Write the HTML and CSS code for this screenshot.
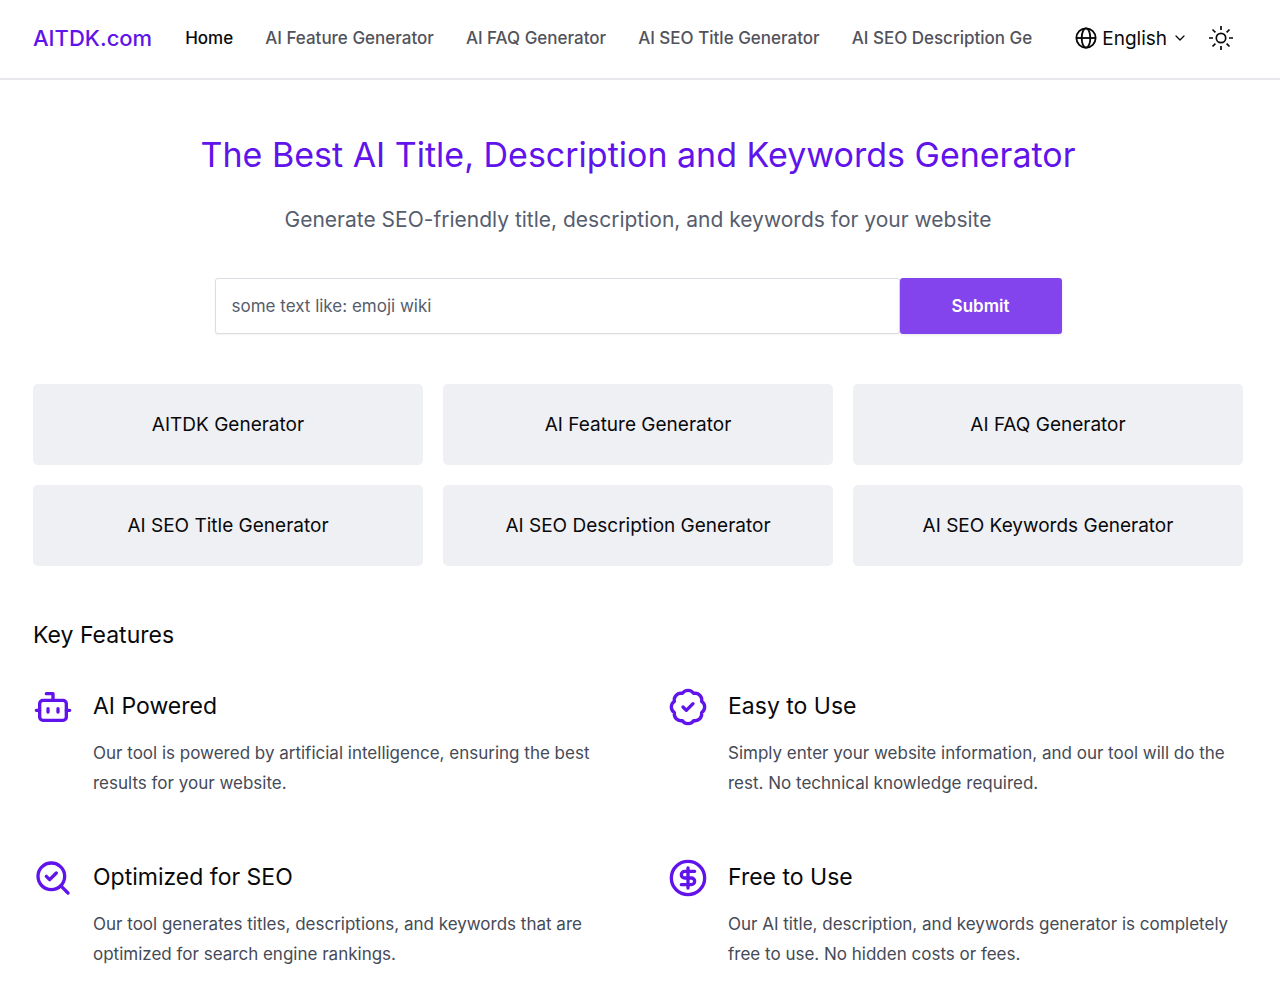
FILE: index.html
```html
<!DOCTYPE html>
<html lang="en">
<head>
<meta charset="utf-8">
<meta name="viewport" content="width=device-width, initial-scale=1">
<title>AITDK.com</title>
<link rel="stylesheet" href="styles.css">
</head>
<body>
<header class="header">
  <a class="brand" href="#">AITDK.com</a>
  <nav class="nav" aria-label="Main">
    <a class="nav-link active" href="#">Home</a>
    <a class="nav-link" href="#">AI Feature Generator</a>
    <a class="nav-link" href="#">AI FAQ Generator</a>
    <a class="nav-link" href="#">AI SEO Title Generator</a>
    <a class="nav-link" href="#">AI SEO Description Generator</a>
  </nav>
  <div class="tools">
    <button class="language" type="button">
      <svg class="globe" viewBox="0 0 24 24" fill="none" stroke="currentColor" stroke-width="2" aria-hidden="true"><circle cx="12" cy="12" r="10.5"/><ellipse cx="12" cy="12" rx="4.7" ry="10.5"/><path d="M1.5 12h21"/></svg>
      <span>English</span>
      <svg class="chevron" viewBox="0 0 12 12" fill="none" stroke="currentColor" stroke-width="1.3" stroke-linecap="round" stroke-linejoin="round" aria-hidden="true"><path d="M2 4l4 4 4-4"/></svg>
    </button>
    <button class="theme" type="button" aria-label="Toggle theme">
      <svg class="sun" viewBox="0 0 26 26" fill="none" stroke="currentColor" stroke-width="1.7" aria-hidden="true"><circle cx="13" cy="13" r="4.7"/><path d="M13 1v4M13 21v4M1 13h4M21 13h4M4.5 4.5l2.9 2.9M18.6 18.6l2.9 2.9M21.5 4.5l-2.9 2.9M7.4 18.6l-2.9 2.9"/></svg>
    </button>
  </div>
</header>
<main class="main">
  <section class="hero">
    <h1 class="hero-title">The Best AI Title, Description and Keywords Generator</h1>
    <p class="hero-text">Generate SEO-friendly title, description, and keywords for your website</p>
    <form class="search">
      <input class="search-input" type="text" aria-label="Website topic" placeholder="some text like: emoji wiki">
      <button class="search-button" type="submit">Submit</button>
    </form>
  </section>
  <nav class="cards" aria-label="Generators">
    <a class="card" href="#">AITDK Generator</a>
    <a class="card" href="#">AI Feature Generator</a>
    <a class="card" href="#">AI FAQ Generator</a>
    <a class="card" href="#">AI SEO Title Generator</a>
    <a class="card" href="#">AI SEO Description Generator</a>
    <a class="card" href="#">AI SEO Keywords Generator</a>
  </nav>
  <section>
    <h2 class="section-title">Key Features</h2>
    <div class="features">
      <article class="feature">
        <svg class="feature-icon" viewBox="0 0 24 24" aria-hidden="true"><rect x="4" y="8" width="16" height="12" rx="2"/><path d="M12 8V4H8M2 14h2M20 14h2M15 13v2M9 13v2"/></svg>
        <div>
          <h3 class="feature-title">AI Powered</h3>
          <p class="feature-text">Our tool is powered by artificial intelligence, ensuring the best results for your website.</p>
        </div>
      </article>
      <article class="feature">
        <svg class="feature-icon" viewBox="0 0 24 24" aria-hidden="true"><path d="M3.85 8.62a4 4 0 0 1 4.78-4.77 4 4 0 0 1 6.74 0 4 4 0 0 1 4.78 4.78 4 4 0 0 1 0 6.74 4 4 0 0 1-4.77 4.78 4 4 0 0 1-6.75 0 4 4 0 0 1-4.78-4.77 4 4 0 0 1 0-6.76Z"/><path d="m9 12 2 2 4-4"/></svg>
        <div>
          <h3 class="feature-title">Easy to Use</h3>
          <p class="feature-text">Simply enter your website information, and our tool will do the rest. No technical knowledge required.</p>
        </div>
      </article>
      <article class="feature">
        <svg class="feature-icon" viewBox="0 0 24 24" aria-hidden="true"><path d="m8 11 2 2 4-4"/><circle cx="11" cy="11" r="8"/><path d="m21 21-4.3-4.3"/></svg>
        <div>
          <h3 class="feature-title">Optimized for SEO</h3>
          <p class="feature-text">Our tool generates titles, descriptions, and keywords that are optimized for search engine rankings.</p>
        </div>
      </article>
      <article class="feature">
        <svg class="feature-icon" viewBox="0 0 24 24" aria-hidden="true"><circle cx="12" cy="12" r="10"/><path d="M16 8h-6a2 2 0 1 0 0 4h4a2 2 0 1 1 0 4H8M12 18V6"/></svg>
        <div>
          <h3 class="feature-title">Free to Use</h3>
          <p class="feature-text">Our AI title, description, and keywords generator is completely free to use. No hidden costs or fees.</p>
        </div>
      </article>
    </div>
  </section>
</main>
</body>
</html>
```
FILE: styles.css
```css
* { box-sizing: border-box; }
body {
  margin: 0;
  background: #fff;
  color: #09090b;
  font-family: Inter, "Liberation Sans", sans-serif;
}
h1, h2, h3, p { margin: 0; font-weight: 400; }
a { color: inherit; text-decoration: none; }
button { border: 0; padding: 0; background: none; color: inherit; font: inherit; cursor: pointer; }
svg { display: block; flex: none; }

.header {
  display: flex;
  align-items: center;
  height: 80px;
  padding: 0 46px 2px 33px;
  border-bottom: 2px solid #e7e7ec;
}
.brand { margin-right: 33px; color: #6013ea; font-size: 22px; font-weight: 500; }
.nav { display: flex; flex: 1; gap: 32px; min-width: 0; overflow: hidden; }
.nav-link { flex: none; color: #52525b; font-size: 17px; font-weight: 500; line-height: 28px; }
.active { color: #09090b; }
.tools { display: flex; align-items: center; gap: 22px; margin-left: 43px; }
.language { display: flex; align-items: center; gap: 5px; font-size: 19px; }
.globe { width: 22px; height: 22px; }
.chevron { width: 12px; height: 12px; margin-left: 2px; }
.sun { width: 26px; height: 26px; }

.main { padding: 50px 37px 32px 33px; }
.hero { text-align: center; }
.hero-title { color: #6013ea; font-size: 34px; line-height: 50px; }
.hero-text { margin-top: 22px; color: #565d6d; font-size: 21px; line-height: 36px; }
.search { display: flex; width: 70%; margin: 40px auto 0; }
.search-input {
  flex: 1;
  min-width: 0;
  height: 56px;
  padding: 0 16px;
  border: 1px solid #dcdce3;
  border-radius: 3px;
  box-shadow: 0 1px 2px #0000000d;
  background: #fff;
  color: #09090b;
  font: 17px Inter, "Liberation Sans", sans-serif;
}
.search-input::placeholder { color: #565d6d; opacity: 1; }
.search-button {
  width: 162px;
  border-radius: 3px;
  box-shadow: 0 1px 3px #0000001a;
  background: #8344ed;
  color: #fff;
  font-size: 17px;
  font-weight: 600;
}

.cards { display: grid; grid-template-columns: repeat(3, 1fr); gap: 20px; margin-top: 50px; }
.card { padding: 24px; border-radius: 5px; background: #eff0f4; font-size: 19px; line-height: 33px; text-align: center; }

.section-title { margin-top: 50px; font-size: 23px; line-height: 38px; }
.features { display: grid; grid-template-columns: 1fr 1fr; gap: 60px; margin-top: 33px; }
.feature { display: flex; gap: 20px; }
.feature-icon { width: 40px; height: 40px; fill: none; stroke: #6013ea; stroke-width: 2; stroke-linecap: round; stroke-linejoin: round; }
.feature-title { font-size: 23px; line-height: 38px; }
.feature-text { margin-top: 13px; color: #454a57; font-size: 17px; line-height: 30px; }
```
